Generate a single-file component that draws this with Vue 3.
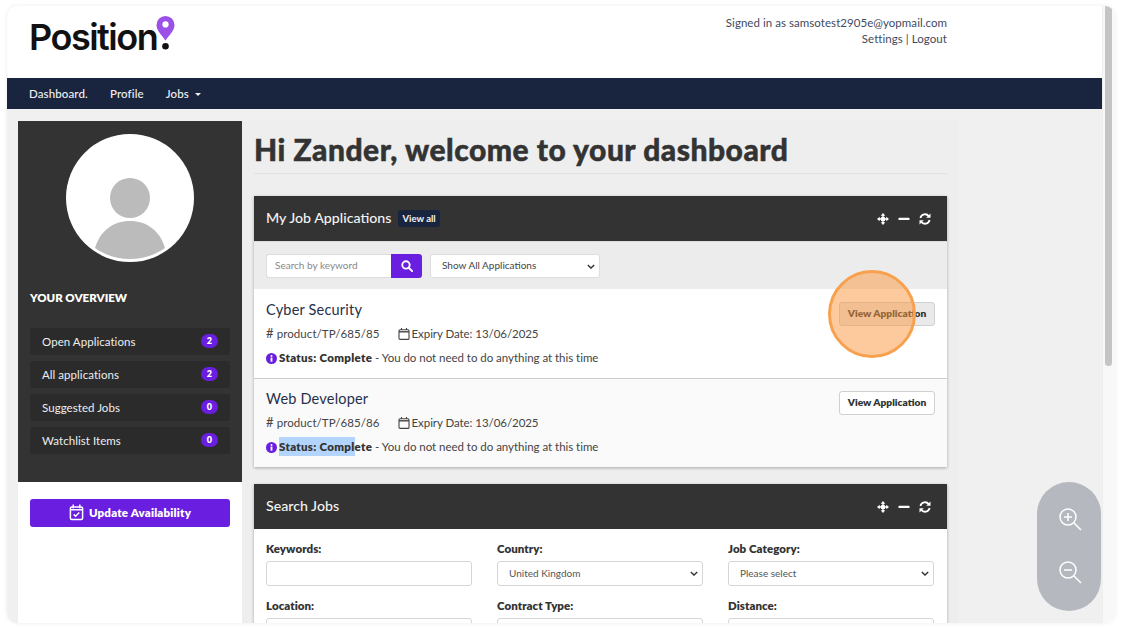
<script setup>
const stats = [
  { label: 'Open Applications', n: 2 },
  { label: 'All applications', n: 2 },
  { label: 'Suggested Jobs', n: 0 },
  { label: 'Watchlist Items', n: 0 }
]
const jobs = [
  { title: 'Cyber Security', ref: 'product/TP/685/85', alt: false },
  { title: 'Web Developer', ref: 'product/TP/685/86', alt: true }
]
const fields = [
  { label: 'Keywords:' },
  { label: 'Country:', select: 'United Kingdom' },
  { label: 'Job Category:', select: 'Please select' },
  { label: 'Location:' },
  { label: 'Contract Type:', select: ' ' },
  { label: 'Distance:', select: ' ' }
]
</script>

<template>
  <div class="shot">
    <div class="window">
      <div class="page">
        <header class="top">
          <div class="logo">
            <span class="logo-text">Position</span>
            <svg class="pin" viewBox="0 0 20 38" width="19" height="36">
              <path fill="#9b51e8" d="M10 1a9.500 9.500 0 0 0-9.500 9.500C.5 16.500 6 21 10 27c4-6 9.500-10.500 9.500-16.500A9.500 9.500 0 0 0 10 1z" />
              <circle cx="10" cy="10" r="3.300" fill="#fff" />
              <circle cx="10" cy="33" r="3.500" fill="#111" />
            </svg>
          </div>
          <div class="account">
            <div>Signed in as samsotest2905e@yopmail.com</div>
            <div>Settings | Logout</div>
          </div>
        </header>
        <nav class="nav">
          <span>Dashboard.</span>
          <span>Profile</span>
          <span>Jobs <i class="caret"></i></span>
        </nav>
        <div class="content">
          <aside class="side">
            <div class="side-dark">
              <svg class="avatar" viewBox="0 0 128 128" width="128" height="128">
                <circle cx="64" cy="64" r="64" fill="#fff" />
                <circle cx="64" cy="64" r="20" fill="#bbb" />
                <path fill="#bbb" d="M29 114c5-17 18-27 35-27s30 10 35 27c-10 7-22 11-35 11s-25-4-35-11z" />
              </svg>
              <h3 class="overview">YOUR OVERVIEW</h3>
              <ul class="stats">
                <li v-for="s in stats" :key="s.label">
                  <span>{{ s.label }}</span><b class="badge">{{ s.n }}</b>
                </li>
              </ul>
            </div>
            <button class="update">
              <svg viewBox="0 0 16 18" width="15" height="17" fill="none" stroke="#fff" stroke-width="1.600">
                <rect x="1.500" y="3" width="13" height="13.500" rx="1.500" />
                <path d="M4.500 .5v4M11.500 .5v4M1.500 6h13" />
                <path d="M5 11l2 2 4-4" />
              </svg>
              Update Availability
            </button>
          </aside>
          <main class="main">
            <h1 class="title">Hi Zander, welcome to your dashboard</h1>

            <section class="panel">
              <div class="panel-head">
                <span class="panel-title">My Job Applications</span>
                <span class="viewall">View all</span>
                <span class="tools">
                  <svg viewBox="0 0 12 12" width="12" height="12" fill="#fff"><path d="M6 0l2.300 2.700H3.700zM6 12l2.300-2.700H3.700zM0 6l2.700-2.300v4.600zM12 6L9.300 3.700v4.600z" /><path d="M6 2v8M2 6h8" stroke="#fff" stroke-width="1.500" /><rect x="4" y="4" width="4" height="4" rx=".5" /></svg>
                  <svg viewBox="0 0 12 12" width="12" height="12" fill="#fff"><rect x="0.500" y="4.800" width="11" height="2.200" rx=".6" /></svg>
                  <svg viewBox="0 0 12 12" width="12" height="12" fill="none" stroke="#fff" stroke-width="1.800"><path d="M1.400 5A4.700 4.700 0 0 1 9.800 3.200M10.600 7A4.700 4.700 0 0 1 2.200 8.800" /><path fill="#fff" stroke="none" d="M11.500.5v4.300H7.200zM.5 11.500V7.200h4.300z" /></svg>
                </span>
              </div>
              <div class="toolbar">
                <div class="search">
                  <span class="search-input">Search by keyword</span>
                  <span class="search-btn">
                    <svg viewBox="0 0 14 14" width="12" height="12" fill="none" stroke="#fff" stroke-width="2.200"><circle cx="5.800" cy="5.800" r="4.300" /><path d="M9 9l4 4" stroke-linecap="round" /></svg>
                  </span>
                </div>
                <div class="filter">
                  <span>Show All Applications</span>
                  <svg class="chev" viewBox="0 0 10 6" width="8" height="5" fill="none" stroke="#333" stroke-width="1.700"><path d="M1 1l4 4 4-4" /></svg>
                </div>
              </div>
              <article v-for="(j, i) in jobs" :key="j.ref" class="job" :class="{ alt: j.alt }">
                <div class="job-text">
                  <h2>{{ j.title }}</h2>
                  <div class="meta">
                    <span class="ref"><i class="hash">#</i> {{ j.ref }}</span>
                    <span class="exp">
                      <svg viewBox="0 0 12 12" width="12" height="12" fill="none" stroke="#444" stroke-width="1.100"><rect x="1" y="1.800" width="10" height="9.600" rx="1" /><path d="M1 3.800h10" stroke-width="1.400" /><path d="M3.500 0v2M8.500 0v2" /></svg>
                      <span>Expiry Date: 13/06/2025</span>
                    </span>
                  </div>
                  <div class="status">
                    <svg viewBox="0 0 12 12" width="11" height="11"><circle cx="6" cy="6" r="6" fill="#6a1ee0" /><rect x="5" y="5" width="2" height="4.500" fill="#fff" /><circle cx="6" cy="3.200" r="1.100" fill="#fff" /></svg>
                    <span v-if="i === 0" class="strong">Status: Complete</span>
                    <span v-else class="strong"><mark>Status: Compl</mark>ete</span>
                    <span class="rest"> - You do not need to do anything at this time</span>
                  </div>
                </div>
                <button class="view" :class="{ hover: i === 0 }">View Application</button>
              </article>
            </section>

            <section class="panel second">
              <div class="panel-head">
                <span class="panel-title">Search Jobs</span>
                <span class="tools">
                  <svg viewBox="0 0 12 12" width="12" height="12" fill="#fff"><path d="M6 0l2.300 2.700H3.700zM6 12l2.300-2.700H3.700zM0 6l2.700-2.300v4.600zM12 6L9.300 3.700v4.600z" /><path d="M6 2v8M2 6h8" stroke="#fff" stroke-width="1.500" /><rect x="4" y="4" width="4" height="4" rx=".5" /></svg>
                  <svg viewBox="0 0 12 12" width="12" height="12" fill="#fff"><rect x="0.500" y="4.800" width="11" height="2.200" rx=".6" /></svg>
                  <svg viewBox="0 0 12 12" width="12" height="12" fill="none" stroke="#fff" stroke-width="1.800"><path d="M1.400 5A4.700 4.700 0 0 1 9.800 3.200M10.600 7A4.700 4.700 0 0 1 2.200 8.800" /><path fill="#fff" stroke="none" d="M11.500.5v4.300H7.200zM.5 11.500V7.200h4.300z" /></svg>
                </span>
              </div>
              <div class="form">
                <div v-for="f in fields" :key="f.label" class="field">
                  <label>{{ f.label }}</label>
                  <div class="box">
                    <span v-if="f.select">{{ f.select }}</span>
                    <svg v-if="f.select" class="chev" viewBox="0 0 10 6" width="8" height="5" fill="none" stroke="#333" stroke-width="1.700"><path d="M1 1l4 4 4-4" /></svg>
                  </div>
                </div>
              </div>
            </section>
          </main>
        </div>
      </div>
      <div class="scrollbar"><div class="thumb"></div></div>
    </div>

    <div class="click"></div>
    <div class="zoom">
      <svg viewBox="0 0 24 24" width="24" height="24" fill="none" stroke="#fff" stroke-width="1.500"><circle cx="10" cy="10" r="8" /><path d="M16 16l7 7M10 6v8M6 10h8" /></svg>
      <svg viewBox="0 0 24 24" width="24" height="24" fill="none" stroke="#fff" stroke-width="1.500"><circle cx="10" cy="10" r="8" /><path d="M16 16l7 7M6 10h8" /></svg>
    </div>
  </div>
</template>

<style>
html, body { margin: 0; background: #fff; }
</style>

<style scoped>
* { box-sizing: border-box; }
.shot {
  position: relative;
  width: 1125px;
  height: 629px;
  overflow: hidden;
  background: #fff;
  padding: 6px 10px 6px 7px;
  font-family: Lato, "Liberation Sans", sans-serif;
  color: #333;
}
.window {
  display: flex;
  height: 617px;
  border-radius: 10px;
  overflow: hidden;
  box-shadow: 0 0 4px rgba(0,0,0,.08);
}
.page { width: 1095px; background: #f0f0f0; display: flex; flex-direction: column; }
.scrollbar { width: 13px; background: #f8f8f8; padding: 0 0 0 2px; border-left: 1px solid #eee; }
.thumb { width: 7px; height: 360px; background: #c4c4c4; border-radius: 0 0 4px 4px; }

.top {
  height: 72px;
  flex: none;
  background: #fff;
  display: flex;
  justify-content: space-between;
  padding: 9px 155px 0 22px;
}
.logo { display: flex; align-items: flex-start; height: 50px; }
.logo-text {
  font-family: Inter, "Liberation Sans", sans-serif;
  font-size: 36px;
  font-weight: 600;
  letter-spacing: -1.500px;
  color: #111;
  line-height: 44px;
}
.pin { margin-left: -1px; }
.account { text-align: right; font-size: 11.500px; line-height: 16px; color: #3f4a5e; letter-spacing: .05px; }

.nav {
  height: 31px;
  flex: none;
  background: #19243f;
  color: #f0f0f0;
  display: flex;
  align-items: center;
  gap: 22px;
  padding-left: 22px;
  font-size: 11.500px;
  font-weight: 500;
  letter-spacing: .12px;
}
.caret {
  display: inline-block;
  width: 0; height: 0;
  border: 3.500px solid transparent;
  border-top: 3.500px solid #f0f0f0;
  border-bottom: 0;
  margin-left: 3px;
  vertical-align: 2px;
}

.content { flex: 1; display: flex; min-height: 0; overflow: hidden; padding: 12px 0 0 11px; }
.side { width: 224px; flex: none; background: #fff; }
.side-dark { background: #333; height: 361px; padding: 13px 12px 0; }
.avatar { display: block; margin: 0 auto; }
.overview { margin: 29px 0 0; font-size: 11.500px; font-weight: 800; line-height: 14px; color: #fff; }
.stats { list-style: none; margin: 23px 0 0; padding: 0; display: flex; flex-direction: column; gap: 6px; }
.stats li {
  height: 27px;
  background: #2b2b2b;
  border-radius: 3px;
  display: flex;
  justify-content: space-between;
  align-items: center;
  padding: 0 12px;
  font-size: 11.500px;
  letter-spacing: .05px;
  color: #eee;
}
.badge {
  min-width: 17px;
  height: 14px;
  border-radius: 7px;
  background: #6a1ee0;
  color: #fff;
  font-size: 9px;
  line-height: 14px;
  text-align: center;
  font-weight: 800;
  margin-top: -2px;
}
.update {
  display: flex;
  align-items: center;
  justify-content: center;
  gap: 5px;
  width: 200px;
  height: 28px;
  margin: 17px 0 0 12px;
  padding: 0 0 2px;
  border: 0;
  border-radius: 3px;
  background: #6a1ee0;
  color: #fff;
  font: 800 11.500px Lato, "Liberation Sans", sans-serif;
  letter-spacing: .2px;
}

.main { width: 716px; flex: none; padding: 0 11px 0 12px; background: #eee; }
.title {
  margin: 0;
  height: 53px;
  padding-top: 9px;
  font-size: 30px;
  font-weight: 900;
  line-height: 38px;
  color: #333;
  border-bottom: 1px solid #e2e2e2;
  letter-spacing: .5px;
  -webkit-text-stroke: .5px #333;
}
.panel { margin-top: 22px; background: #fff; box-shadow: 0 1px 3px rgba(0,0,0,.3); }
.panel.second { margin-top: 17px; }
.panel-head {
  height: 45px;
  background: #333;
  color: #fff;
  display: flex;
  align-items: center;
  padding: 0 16px 0 12px;
}
.panel-title { font-size: 14.200px; font-weight: 500; color: #f4f4f4; margin-top: -2px; }
.viewall {
  margin-left: 7px;
  background: #19243f;
  color: #f4f4f4;
  font-size: 9.500px;
  font-weight: 700;
  padding: 0 4px;
  height: 17px;
  line-height: 17px;
  border-radius: 3px;
}
.tools { margin-left: auto; display: flex; gap: 9px; }
.toolbar {
  height: 48px;
  background: #ececec;
  display: flex;
  align-items: center;
  gap: 8px;
  padding: 0 12px;
  border-top: 1px solid #ddd;
}
.search { display: flex; width: 156px; height: 24px; }
.search-input {
  width: 125px;
  background: #fff;
  border: 1px solid #ddd;
  border-right: 0;
  border-radius: 3px 0 0 3px;
  font-size: 10px;
  line-height: 20px;
  padding-left: 8px;
  color: #888;
}
.search-btn {
  flex: 1;
  background: #6a1ee0;
  border-radius: 0 3px 3px 0;
  display: flex;
  align-items: center;
  justify-content: center;
}
.filter {
  position: relative;
  width: 170px;
  height: 24px;
  background: #fff;
  border: 1px solid #ddd;
  border-radius: 3px;
  font-size: 10px;
  line-height: 20px;
  padding-left: 11px;
  color: #444;
}
.chev { position: absolute; right: 4px; top: 9px; }
.job {
  height: 90px;
  background: #fff;
  padding: 12px 12px 0;
  display: flex;
  justify-content: space-between;
  align-items: flex-start;
  border-bottom: 1px solid #ccc;
}
.job.alt { background: #fafafa; height: 88px; border-bottom: 0; padding-top: 11px; }
.job h2 { margin: 0; font-size: 14.500px; font-weight: 400; line-height: 18px; color: #26304a; letter-spacing: .2px; }
.meta { display: flex; gap: 18px; margin-top: 6px; font-size: 11.500px; line-height: 16px; color: #444; }
.ref { letter-spacing: .08px; }
.hash { font-style: normal; font-size: 13px; }
.exp { display: inline-flex; align-items: center; gap: 2px; letter-spacing: -.06px; }
.status { margin-top: 8px; font-size: 11.500px; line-height: 16px; color: #444; display: flex; align-items: center; white-space: pre; }
.status svg { margin-right: 2px; }
.strong { font-weight: 800; color: #333; letter-spacing: .3px; }
.rest { letter-spacing: -.03px; }
mark { background: #b3d4fc; color: #333; padding: 3px 0; }
.view {
  width: 96px;
  height: 24px;
  margin-top: 1px;
  background: #fff;
  border: 1px solid #d0d0d0;
  border-radius: 3px;
  font: 800 10.200px Lato, "Liberation Sans", sans-serif;
  color: #333;
  padding: 0 0 2px;
}
.view.hover { background: #e9e9e9; }

.form {
  display: grid;
  grid-template-columns: repeat(3, 206px);
  column-gap: 25px;
  row-gap: 13px;
  padding: 13px 12px 0;
}
.field label { display: block; font-size: 11.500px; font-weight: 800; line-height: 14px; color: #333; margin-bottom: 5px; letter-spacing: .05px; }
.box {
  position: relative;
  height: 25px;
  background: #fff;
  border: 1px solid #d6d6d6;
  border-radius: 3px;
  font-size: 10px;
  line-height: 23px;
  padding-left: 11px;
  color: #555;
}

.click {
  position: absolute;
  left: 828px;
  top: 270px;
  width: 88px;
  height: 88px;
  border-radius: 50%;
  background: rgba(250,150,60,.5);
  border: 3px solid #f7a04e;
}
.zoom {
  position: absolute;
  left: 1037px;
  top: 482px;
  width: 64px;
  height: 129px;
  border-radius: 32px;
  background: #b5b8bf;
  display: flex;
  flex-direction: column;
  align-items: center;
  justify-content: center;
  gap: 29px;
  padding: 0 0 2px 2px;
}
</style>
